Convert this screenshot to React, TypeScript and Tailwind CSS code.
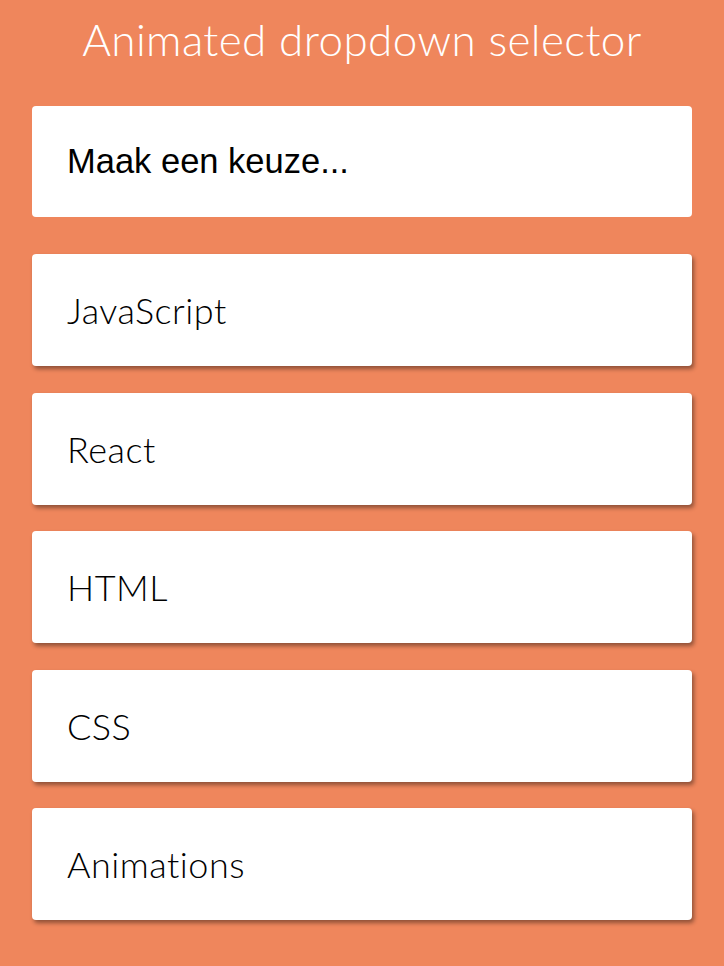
const options = ['JavaScript', 'React', 'HTML', 'CSS', 'Animations'];

export default function App() {
  return (
    <div className="min-h-[966px] w-full bg-[#ef865c] px-8 font-['Lato','Noto_Sans',sans-serif]">
      {/* Title */}
      <h1 className="h-[106px] pt-[10px] text-center text-[44px] font-light leading-[58px] tracking-[0.4px] text-white">
        Animated dropdown selector
      </h1>

      {/* Trigger */}
      <div className="flex h-[111px] items-center rounded bg-white px-[35px]">
        <span className="font-['Liberation_Sans',sans-serif] text-[34.5px] text-black">Maak een keuze...</span>
      </div>

      {/* Options */}
      <ul className="mt-[37px] flex flex-col gap-[26.5px]">
        {options.map((opt) => (
          <li
            key={opt}
            className="flex h-[112px] items-center rounded bg-white px-[35px] shadow-[2px_3px_4px_rgba(0,0,0,0.4)]"
          >
            <span className="text-[36px] font-light tracking-[0.5px] text-black">{opt}</span>
          </li>
        ))}
      </ul>
    </div>
  );
}
